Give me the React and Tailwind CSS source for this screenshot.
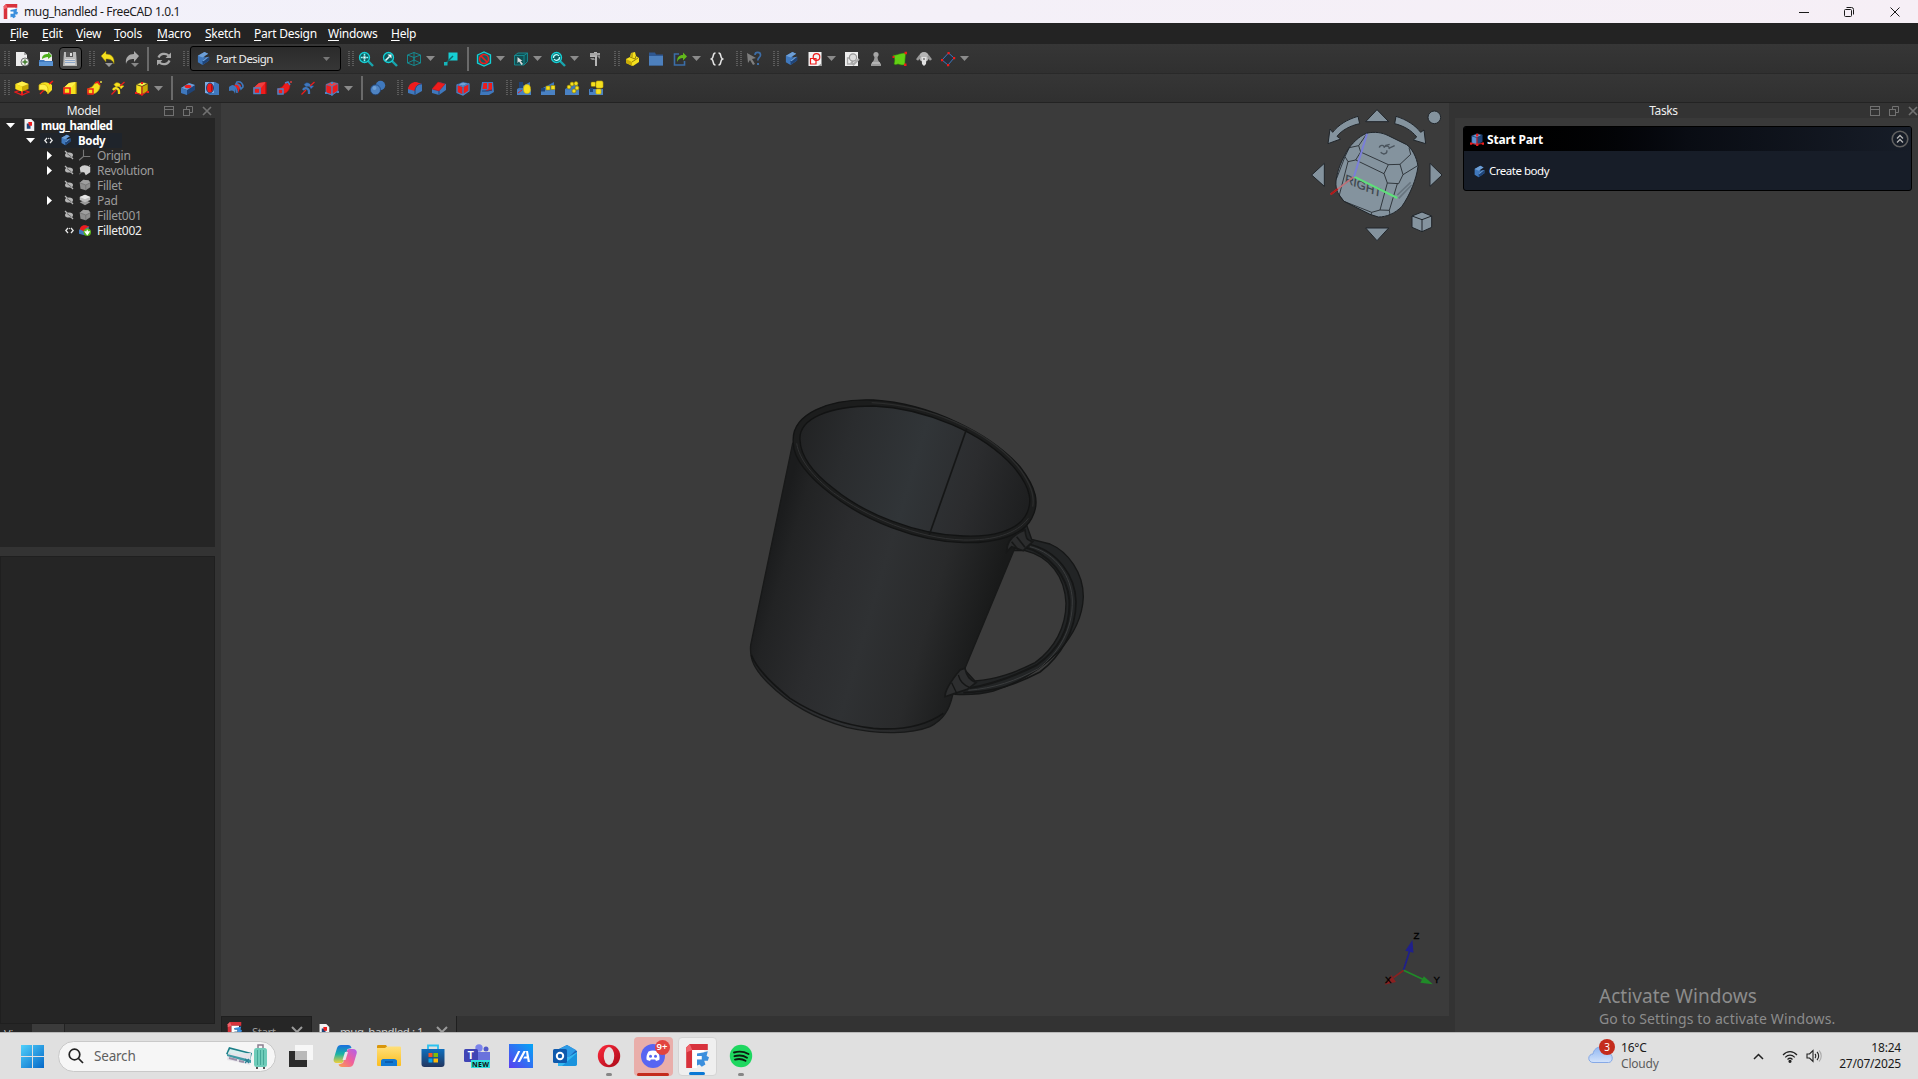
import React from "react";

const Svg = ({ s = 16, children, className = "", vb = "0 0 16 16" }) => (
  <svg width={s} height={s} viewBox={vb} className={"shrink-0 " + className}>{children}</svg>
);

const Y = "#f5e01e", YD = "#c9ab06", YL = "#fff04a", R = "#ee1c1c", RD = "#b00f0f", B = "#3f78bd", BL = "#6d9fd6", BD = "#1f4478", C = "#16d0d6";

/* ---------- toolbar icons ---------- */
const BodyIcon = ({ s = 14, a = BL, b = B, c = BD }) => (
  <Svg s={s}>
    <path d="M2 5 9 1l4 2-4 2v2l5-1v4l-7 5-5-3z" fill={b} />
    <path d="M2 5 9 1l4 2-6 4z" fill={a} />
    <path d="M9 8l5-2v4l-7 5v-4z" fill={c} />
    <path d="M7 10l4-3 3-1-6 5z" fill={a} />
  </Svg>
);
const Cube = ({ t, l, r, e = "#222" }) => (
  <g stroke={e} strokeWidth=".6">
    <path d="M2 4.500 8 2l6 1.500-6 3z" fill={t} />
    <path d="M2 4.500 8 6.500V15l-6-2.500z" fill={l} />
    <path d="M8 6.500 14 3.500V11L8 15z" fill={r} />
  </g>
);
const NewIcon = () => (
  <Svg><path d="M2 1h8l3 3v11H2z" fill="#ececec" /><path d="M10 1v3h3z" fill="#aaa" /><circle cx="11" cy="11" r="4" fill="#e8e8e8" stroke="#444" strokeWidth=".7" /><path d="M11 8.500v5M8.500 11h5" stroke="#3d7a28" strokeWidth="1.400" /></Svg>
);
const OpenIcon = () => (
  <Svg><path d="M2 1h9l3 3v6H2z" fill="#f0f0f0" /><path d="M4 8c0-4 3-5 6-5V1l4 4-4 3V6C7 6 6 7 4 8z" fill="#4caf1a" /><path d="M1 9h5l1 1h8v5H1z" fill={B} /><path d="M1 11h14v4H1z" fill="#5a94d4" /></Svg>
);
const SaveIcon = () => (
  <Svg><path d="M2 1h12l1 14H1z" fill="#b9b9b9" /><path d="M4 1h7v5H4z" fill="#555" /><path d="M8 2h2v3H8z" fill="#ddd" /><path d="M3 8h10v6H3z" fill="#d8d8d8" /><path d="M3 9.500h10M3 11.500h10" stroke="#8ea7c9" /></Svg>
);
const UndoIcon = () => (
  <Svg s={18} vb="0 0 18 18"><path d="M2 6l5-5v3c5 0 9 3 8 10-1-4-4-5-8-5v3z" fill={Y} stroke="#8a7a08" strokeWidth=".5" /><path d="M6 13h8l-4 4z" fill="#999" /></Svg>
);
const RedoIcon = () => (
  <Svg s={18} vb="0 0 18 18"><path d="M16 6l-5-5v3C6 4 2 7 3 14c1-4 4-5 8-5v3z" fill="#a9a9a9" /><path d="M8 13h8l-4 4z" fill="#888" /></Svg>
);
const RefreshIcon = () => (
  <Svg><path d="M2.500 6.500A6 5.500 0 0 1 12.500 4.500M13.500 9.500A6 5.500 0 0 1 3.500 11.500" fill="none" stroke="#a8a8a8" strokeWidth="2.200" /><path d="M15 1.500v5.500h-5.500zM1 14.500V9h5.500z" fill="#a8a8a8" /></Svg>
);
const Lens = ({ children }) => (
  <Svg><path d="M9.500 9.500 15 15" stroke="#18a5ad" strokeWidth="2.400" /><circle cx="6.500" cy="6.500" r="5" fill="#0d5c60" stroke={C} strokeWidth="1.300" />{children}</Svg>
);
const FitAll = () => <Lens><path d="M6.500 2.800v2M6.500 8.200v2M2.800 6.500h2M8.200 6.500h2" stroke="#8ff" strokeWidth="1.600" /><rect x="5.300" y="5.300" width="2.400" height="2.400" fill="#e8ffff" /></Lens>;
const FitSel = () => <Lens><path d="M3.500 9.500l4-4" stroke="#e8ffff" strokeWidth="1.600" /><path d="M5.500 3.500h4v4z" fill="#fff" /></Lens>;
const ViewLens = () => <Lens><path d="M3.500 7a3 3 0 0 1 5.500-2M9.500 6a3 3 0 0 1-5.500 2" stroke="#bff" fill="none" strokeWidth="1.300" /></Lens>;
const WireCube = () => (
  <Svg><path d="M1.500 4 8 1.500 14.500 4v8L8 14.500 1.500 12zM1.500 4 8 6.500 14.500 4M8 6.500v8M8 1.500V9M1.500 12 8 9l6.500 3" fill="none" stroke="#139298" strokeWidth=".9" /></Svg>
);
const AlignIcon = () => <Svg><rect x="5.500" y="1.500" width="9" height="8" fill="#16cfd5" /><path d="M3 12l7-7" stroke="#0b6a6d" strokeWidth="1.400" /><rect x="1" y="11" width="3.500" height="3.500" fill="#16b5ba" /></Svg>;
const DrawStyle = () => <Svg><path d="M1.500 4 8 1l6.500 3v8L8 15l-6.500-3z" fill="#145c60" stroke={C} strokeWidth="1.300" /><circle cx="8" cy="8" r="4.500" fill="none" stroke={R} strokeWidth="1.500" /><path d="M4.900 4.900l6.200 6.200" stroke={R} strokeWidth="1.500" /></Svg>;
const SelCube = () => <Svg><path d="M1.500 4.500 5 2h9.500v8.500L11 14H1.500z" fill="#114f52" stroke="#178f95" strokeWidth=".9" /><path d="M1.500 4.500H11V14M11 4.500 14.500 2" fill="none" stroke="#178f95" strokeWidth=".9" /><path d="M4.500 6v6l1.500-1.500 2.500 3.500 1.500-1-2.500-3h2z" fill="#ddd" /></Svg>;
const Caliper = () => <Svg><path d="M7 1h3v14H8V6H3V4h4z" fill="#b5b5b5" /><path d="M3 2h10v2.500H3z" fill="#a3a3a3" /><path d="M3 7h4l1 2H5zM10 5h3v3z" fill="#8c8c8c" /></Svg>;
const PartIcon = () => <Svg><path d="M7 2l4-1 1 4 3 2v4l-6 4-7-3V8l4-2z" fill={Y} /><path d="M2 8l6 3v4l-6-3z" fill={YD} /><path d="M8 11l6-4M6 6l5 2 1-3M8 2v4" stroke="#7b6800" strokeWidth=".8" fill="none" /></Svg>;
const FolderIcon = () => <Svg><path d="M1 1.500h6l1 2h7v11H1z" fill="#2e5790" /><path d="M1 5h14v9.500H1z" fill="#4d80bd" /></Svg>;
const LinkIcon = () => <Svg><path d="M7 3H2.500v11h10v-4" fill="none" stroke="#3b6ea8" strokeWidth="1.600" /><path d="M5 11c0-5 2-7 6-7V1.500L15 5.500l-4 4V7C8 7 6.500 8 5 11z" fill="#62b81b" /></Svg>;
const Braces = () => <Svg><path d="M6.500 2C3 2 5.500 6.500 2.500 8 5.500 9.500 3 14 6.500 14M9.500 2c3.500 0 1 4.500 4 6-3 1.500-.5 6-4 6" fill="none" stroke="#e6e6e6" strokeWidth="1.500" /></Svg>;
const WhatIcon = () => <Svg><path d="M1 2l9 5-4 1 3 5-2 1-3-5-2 3z" fill="#7e7e7e" /><path d="M9 4c0-3.500 5.500-3.500 5.500 0 0 2.500-2.700 2.500-2.700 5.500" fill="none" stroke="#3d6da6" strokeWidth="1.700" /><rect x="11" y="12" width="2" height="2" fill="#3d6da6" /></Svg>;
const SketchIcon = () => <Svg><rect x="1.500" y="1" width="13" height="14" fill="#f3f3f3" /><path d="M3.500 7.500h5.500v5.500H3.500z" fill="#fff" stroke={R} strokeWidth="1.200" /><circle cx="9.500" cy="6" r="3.300" fill="none" stroke={R} strokeWidth="1.200" /><path d="M15 12v3h-4z" fill="#999" /></Svg>;
const CheckSketch = () => <Svg><rect x="1" y="1" width="13" height="14" fill="#eee" /><path d="M3.500 7h5v6h-5z" fill="none" stroke="#aaa" strokeWidth="1.300" /><circle cx="9" cy="6.500" r="3.600" fill="#ddd" stroke="#999" strokeWidth="1.200" /><path d="M7 11l2.500 2.500L15 8" fill="none" stroke="#aaa" strokeWidth="2" /></Svg>;
const Pawn = () => <Svg><circle cx="8" cy="3.500" r="2.600" fill="#a6a6a6" /><path d="M6.500 5h3c0 4 1 5 3.500 8v2H3v-2c2.500-3 3.500-4 3.500-8z" fill="#9b9b9b" /><path d="M4 12h8" stroke="#ccc" /></Svg>;
const ShapeBinder = () => <Svg><path d="M1 4c3 1 6-2 13-2-1 5-1 7-1 12-3 0-5 0-7-1-2 1-3 1-4 0 1-4 1-5-1-9z" fill="#62d014" stroke="#2d7908" strokeWidth=".6" /><path d="M12.500.8h2.500v2.500h-2.500zM.5 5h2v2h-2zM12 12.500h2.500V15H12z" fill={R} /></Svg>;
const Sheep = () => <Svg><circle cx="8" cy="6" r="5" fill="#b5b5b5" /><path d="M1 9l3-4M15 9l-3-4" stroke="#999" strokeWidth="2.600" /><path d="M5.500 6h5l-.5 7-2 2-2-2z" fill="#e1e1e1" /><circle cx="8" cy="8" r="1" fill="#777" /></Svg>;
const Datum = () => <Svg><path d="M8.500 2 14 7l-6 7-6-5z" fill="#26303d" stroke="#3f78bd" strokeWidth="1" /><path d="M7.500 1h2.200v2.200H7.500zM13 6h2.200v2.200H13zM7 13h2.200v2.200H7zM1 8h2.200v2.200H1z" fill={R} /></Svg>;
const Solid = ({ k, m, d, x, l = BL }) => {
  switch (k) {
    case "pad": return <Svg><path d="M1 12l7-2.500 7 2.500-7 3z" fill="none" stroke={x} strokeWidth="1.300" /><path d="M7 10h2v5H7z" fill={x} /><path d="M1.500 4 8 1.500 14.500 4v5L8 11.500 1.500 9z" fill={d} /><path d="M1.500 4 8 1.500 14.500 4 8 6.500z" fill={l} /><path d="M1.500 4 8 6.500v5L1.500 9z" fill={m} /></Svg>;
    case "rev": return <Svg><path d="M14 2 2 14" stroke={x} strokeWidth="1.300" /><path d="M1 5c4-4 9-3 13 0v5l-4 4c-1-4-5-5-9-4z" fill={m} /><path d="M1 5c5-2 9 0 9 5v4c-1-4-5-5-9-4z" fill={l} stroke={d} strokeWidth=".7" /><path d="M15 1l-4 3" stroke={x} strokeWidth="1.300" /></Svg>;
    case "loft": return <Svg><path d="M1.500 8 7 3l7-1v12H7l-5.500-1z" fill={m} /><path d="M1.500 8 7 3l7-1-5 6z" fill={l} /><path d="M2 8h6v5.500H2z" fill={m} stroke={x} strokeWidth="1.600" /><path d="M14 2v12" stroke={d} strokeWidth="1.300" /></Svg>;
    case "sweep": return <Svg><path d="M1.500 9 6 7l4-5 4 3c0 5-3 8-7 9l-5.500-1z" fill={m} stroke={d} strokeWidth=".6" /><path d="M2 9h5v5H2zM9 3l3-1 2 3" fill="none" stroke={x} strokeWidth="1.500" /><path d="M15 1v2" stroke={l} strokeWidth="1.300" /></Svg>;
    case "helix": return <Svg><path d="M4 4.500c2-3 6-2 7 1l3 .5-3 3c-1-3-3-3-5-2z" fill={m} stroke={d} strokeWidth=".5" /><path d="M3 10c2-3 6-2 6 2v2" fill="none" stroke={m} strokeWidth="2.300" /><path d="M1.500 14.500 6 10M10 6l4.500-4" stroke={x} strokeWidth="1.300" /></Svg>;
    case "prim": return <Svg><Cube t={l} l={m} r={m === R ? R : d} e={m === R ? "#4c84c6" : "#3b3820"} /><path d="M8 6v9M2 13l6 2 6-4" stroke={x} strokeWidth=".9" fill="none" /><path d="M1 12h2v2H1zM7 2h2v2H7zM13 11h2v2h-2zM7 13.500h2v2H7z" fill={x} /></Svg>;
    default: return null;
  }
};
const Pocket = () => <Svg><path d="M1 8 9 3l6 2v5l-8 5-6-2z" fill={BD} /><path d="M1 8 9 3l6 2-8 5z" fill={BL} /><path d="M1 8l6 2v5l-6-2z" fill={B} /><ellipse cx="8" cy="6.500" rx="3.400" ry="1.700" fill={R} /></Svg>;
const Hole = () => <Svg><path d="M1 2h10l4 2v11h-9l-5-2z" fill={B} /><path d="M1 2h9v11H1z" fill="#7daae0" /><ellipse cx="6" cy="8" rx="3.500" ry="5" fill={R} stroke={BD} /><path d="M7 4c2 1 2 6 0 8" fill={RD} /></Svg>;
const Groove = () => <Svg><path d="M1 7c3-3 6-2 7 1l-1 6c-1-4-3-4-6-3z" fill={B} /><path d="M7 4c3-2 6 0 6 2l-3 7C10 9 9 7 6 7z" fill={R} /><path d="M9 2c4-1 6 2 6 5l-2 2C12 6 11 4 8 4zM4 6c4 0 5 3 5 7" fill="none" stroke={B} strokeWidth="1.600" /></Svg>;
const Bool = () => <Svg><circle cx="10.500" cy="5.500" r="4.700" fill={B} /><circle cx="5.500" cy="9.800" r="5" fill="#4e83c2" stroke={BD} strokeWidth=".8" /><circle cx="4.500" cy="8" r="2" fill={BL} /></Svg>;
const FilletI = () => <Svg><path d="M1 8 8 2l7 2v7l-7 4-7-2z" fill={B} /><path d="M1 9c1-5 4-7 8-7l6 2c-4 0-7 2-7 7z" fill={R} /><path d="M8 10v5M8 10c1-4 3-6 7-6" stroke={BD} fill="none" /></Svg>;
const Chamfer = () => <Svg><path d="M1 9 8 2l7 2v6l-7 5-7-2z" fill={B} /><path d="M1 9 7 2l7 2-6 7z" fill={R} stroke={RD} strokeWidth=".5" /><path d="M8 11v4" stroke={BD} /></Svg>;
const Draft = () => <Svg><Cube t={BL} l={R} r={R} e={BD} /><path d="M2 4.500 8 6.500 14 3.500M8 6.500V15M2 4.500v8L8 15l6-4V3.500" fill="none" stroke="#4c84c6" strokeWidth="1.200" /></Svg>;
const Thick = () => <Svg><path d="M3 2h11l1 10-5 3H1z" fill={B} /><path d="M4.500 3h3.500v6H3.500zM9.500 3h3.500v8H6l3.500-2z" fill={R} /><path d="M3 11h6l4-1" stroke={BD} fill="none" /></Svg>;
const Pattern = ({ k }) => (
  <Svg>
    <path d={k === 3 ? "M1 9h7v6H1z" : "M1 9 14 2v13H1z"} fill={B} />
    <path d="M1 10 15 9v6H1z" fill="#4a82c4" />
    {k === 0 && <><path d="M3 2h4v6H3z" fill={BD} /><ellipse cx="11" cy="9" rx="3.500" ry="4.500" fill={Y} stroke={YD} strokeWidth=".6" /><path d="M2 13l4-3" stroke={R} /></>}
    {k === 1 && <><rect x="1" y="8" width="4" height="3.500" fill={BD} /><rect x="6" y="6" width="4" height="4" fill={Y} stroke="#8a7600" strokeWidth=".5" /><rect x="11" y="5.500" width="4" height="4" fill={Y} stroke="#8a7600" strokeWidth=".5" /></>}
    {k === 2 && [[5, 7], [8, 4], [12, 3.500], [13, 8], [10, 11]].map(([x, y]) => <circle key={x} cx={x} cy={y} r="2" fill={Y} stroke="#8a7600" strokeWidth=".6" />)}
    {k === 3 && <><rect x="8" y="1" width="7" height="7" rx="1.500" fill={Y} stroke={YD} strokeWidth=".6" /><rect x="3" y="2" width="4.500" height="4.500" rx="1" fill={Y} stroke="#8a7600" strokeWidth=".5" /><rect x="8" y="9" width="5" height="5" rx="1" fill={Y} stroke={YD} strokeWidth=".6" /><path d="M2 8h3v4H2z" fill={BD} /></>}
  </Svg>
);

const Grip = ({ w = "w-[13px]" }) => (
  <div className={"flex h-full shrink-0 items-center justify-end " + w}>
    <svg width="6" height="16" viewBox="0 0 6 16" className="shrink-0">
      {[0, 1, 2, 3, 4, 5, 6, 7].map((i) => <path key={i} d={`M0 ${i * 2 + 0.5}h2M4 ${i * 2 + 0.5}h2`} stroke="#5c5c5c" />)}
    </svg>
  </div>
);
const Slot = ({ children }) => <div className="flex h-full w-6 shrink-0 items-center justify-center">{children}</div>;
const Drop = () => (
  <div className="flex h-full w-[13px] shrink-0 items-center"><svg width="9" height="5" viewBox="0 0 9 5"><path d="M0 0h9L4.500 5z" fill="#8b8b8b" /></svg></div>
);
const Sep = ({ w = "w-[9px]" }) => (
  <div className={"flex h-full shrink-0 items-center justify-center " + w}><div className="h-6 w-0.5 bg-[#6a6a6a]" /></div>
);

const MENU = [["File", "w-8"], ["Edit", "w-[34px]"], ["View", "w-[38px]"], ["Tools", "w-[43px]"], ["Macro", "w-12"], ["Sketch", "w-[49px]"], ["Part Design", "w-[74px]"], ["Windows", "w-[63px]"], ["Help", "w-10"]];

const FreeCadLogo = ({ s = 16 }) => (
  <Svg s={s} vb="0 0 20 20">
    <path d="M4 0h15v5H6v15H1V3z" fill="#d8323c" /><path d="M4 0 1 3v4l5-2z" fill="#f0636b" />
    <path d="M6 5h10v3h-6v2h4v3h-4v7H6z" fill="#fff" />
    <path d="M15 7l4-1-1 4 2 1-1 3-3 0 1 3-3 2-2-2-2 1v-5h4v-3h-4V8z" fill="#3c8fdd" />
  </Svg>
);
const DocIcon = () => <Svg s={12}><path d="M2 0h9l4 4v12H2z" fill="#f2f2f2" /><path d="M5 6h5v7H5z" fill="#1f4478" /><path d="M7 4h5v5H8z" fill={R} /></Svg>;

const TitleBar = () => (
  <header className="flex h-[23px] items-center bg-gradient-to-r from-[#f2f1fa] to-[#f6eff6] pl-[3px]">
    <FreeCadLogo s={15} />
    <span className="ml-1.5 w-[200px] whitespace-nowrap text-[12px] tracking-[-0.38px] text-[#1b1b1b]">mug_handled - FreeCAD 1.0.1</span>
    <div className="ml-auto flex h-full">
      {[0, 1, 2].map((i) => (
        <div key={i} className="flex w-[45.500px] items-center justify-center pr-px">
          <svg width="10" height="10" viewBox="0 0 10 10" fill="none" stroke="#1a1a1a" strokeWidth="1">
            {i === 0 && <path d="M0 5.500h10" />}
            {i === 1 && <><rect x=".5" y="2.500" width="7" height="7" rx="1" /><path d="M2.500 .5h5a2 2 0 0 1 2 2v5" /></>}
            {i === 2 && <path d="M.5.5l9 9M9.500.5l-9 9" />}
          </svg>
        </div>
      ))}
    </div>
  </header>
);

const MenuBar = () => (
  <nav className="flex h-[21px] items-center bg-[#232323] pl-[10px] text-[12px] tracking-[-0.25px] text-white">
    {MENU.map(([t, w]) => (
      <span key={t} className={"shrink-0 whitespace-nowrap " + w}><span className="underline underline-offset-2">{t[0]}</span>{t.slice(1)}</span>
    ))}
  </nav>
);

const yel = { m: Y, d: YD, l: YL, x: R };
const mix = { m: R, d: RD, l: "#f04040", x: "#4c84c6" };

const Toolbars = () => (
  <div className="h-[59px] bg-[#333]">
    <div className="flex h-[30px] items-center border-b border-[#292929] bg-gradient-to-b from-[#363636] to-[#303030]">
      <Grip w="w-[10px]" />
      <Slot><NewIcon /></Slot><Slot><OpenIcon /></Slot>
      <Slot><div className="flex h-[23px] w-[23px] shrink-0 items-center justify-center rounded-sm border border-black bg-[#474747]"><SaveIcon /></div></Slot>
      <Grip w="w-[14px] pr-px" />
      <Slot><UndoIcon /></Slot><Slot><RedoIcon /></Slot><Sep w="w-2" /><Slot><RefreshIcon /></Slot>
      <Grip w="w-[14px] pr-px" />
      <div className="flex h-[25px] w-[151px] shrink-0 items-center rounded-[3px] border border-black bg-gradient-to-b from-[#2b2b2b] to-[#363636] pl-[5px] pr-2.5 text-[11.500px] text-[#eee]">
        <BodyIcon s={15} /><span className="ml-[5px] whitespace-nowrap tracking-[-0.55px]">Part Design</span>
        <svg width="7" height="4" viewBox="0 0 7 4" className="ml-auto"><path d="M0 0h7L3.500 4z" fill="#777" /></svg>
      </div>
      <Grip />
      <Slot><FitAll /></Slot><Slot><FitSel /></Slot><Slot><WireCube /></Slot><Drop /><Slot><AlignIcon /></Slot><Sep />
      <Slot><DrawStyle /></Slot><Drop /><Slot><SelCube /></Slot><Drop /><Slot><ViewLens /></Slot><Drop /><Slot><Caliper /></Slot>
      <Grip /><Slot><PartIcon /></Slot><Slot><FolderIcon /></Slot><Slot><LinkIcon /></Slot><Drop /><Slot><Braces /></Slot>
      <Grip /><Slot><WhatIcon /></Slot>
      <Grip /><Slot><BodyIcon s={15} /></Slot><Slot><SketchIcon /></Slot><Drop /><Slot><CheckSketch /></Slot><Slot><Pawn /></Slot><Slot><ShapeBinder /></Slot><Slot><Sheep /></Slot><Slot><Datum /></Slot><Drop />
    </div>
    <div className="flex h-[29px] items-center border-b border-[#232323] bg-gradient-to-b from-[#363636] to-[#303030]">
      <Grip w="w-[10px]" />
      {["pad", "rev", "loft", "sweep", "helix", "prim"].map((k) => <Slot key={k}><Solid k={k} {...yel} /></Slot>)}
      <Drop /><Sep />
      <Slot><Pocket /></Slot><Slot><Hole /></Slot><Slot><Groove /></Slot>
      <Slot><Solid k="loft" {...mix} /></Slot><Slot><Solid k="sweep" {...mix} /></Slot><Slot><Solid k="helix" m="#3f78bd" d={BD} x={R} /></Slot><Slot><Solid k="prim" {...mix} /></Slot>
      <Drop /><Sep /><Slot><Bool /></Slot>
      <Grip /><Slot><FilletI /></Slot><Slot><Chamfer /></Slot><Slot><Draft /></Slot><Slot><Thick /></Slot>
      <Grip />{[0, 1, 2, 3].map((k) => <Slot key={k}><Pattern k={k} /></Slot>)}
    </div>
  </div>
);

/* ---------- model tree ---------- */
const Eye = ({ on }) => on
  ? <Svg s={9} vb="0 0 9 9"><path d="M3 2 .8 4.500 3 7M6 2l2.200 2.500L6 7" stroke="#e8e8e8" strokeWidth="1.300" fill="none" /><circle cx="4.500" cy="2.500" r=".7" fill="#ccc" /></Svg>
  : <Svg s={10} vb="0 0 10 10"><path d="M1 1l8 8" stroke="#b5b5b5" strokeWidth="1.300" /><ellipse cx="5" cy="5" rx="4" ry="2.600" fill="#b5b5b5" /><path d="M3 3.500 7.500 7" stroke="#555" strokeWidth=".8" /></Svg>;
const GreyCube = () => <Svg s={12}><path d="M1 5 6 1l7 1 2 3v6l-6 4-7-2z" fill="#8d8d8d" /><path d="M1 5 6 1l7 1 2 3-6 3z" fill="#9e9e9e" /><path d="M9 8v7M9 8l6-3M1 5l8 3" stroke="#6f6f6f" fill="none" /></Svg>;
const TreeGlyph = ({ k }) => {
  switch (k) {
    case "origin": return <Svg s={12}><path d="M6 1v9L0 15M6 10h9" stroke="#777" strokeWidth="1.500" fill="none" /></Svg>;
    case "rev": return <Svg s={12}><path d="M1 5c4-5 9-4 14-1v7l-6 4-2-4-5 0z" fill="#d0d0d0" /><path d="M0 14l4-4M12 4l3-3" stroke="#999" /></Svg>;
    case "pad": return <Svg s={12}><path d="M1 11l7-3 7 3-7 4z" fill="#9a9a9a" /><path d="M1 4 8 1l7 3v4l-7 3-7-3z" fill="#bdbdbd" /><path d="M1 4 8 1l7 3-7 3z" fill="#e6e6e6" /></Svg>;
    case "tip": return <Svg s={12}><path d="M0 8 6 2l7 1v8l-6 4-7-2z" fill={B} /><path d="M1 7c1-5 5-6 9-5l4 2c-4 0-6 2-7 6z" fill={R} /><circle cx="11" cy="11" r="5" fill="#58b51d" /><path d="M11 7.500v4M8.500 10.500 11 14l2.500-3.500z" stroke="#fff" strokeWidth="1.600" fill="#fff" /></Svg>;
    default: return <GreyCube />;
  }
};
const TREE = [
  ["Origin", "origin", true, false], ["Revolution", "rev", true, false], ["Fillet", "cube", false, false],
  ["Pad", "pad", true, false], ["Fillet001", "cube", false, false], ["Fillet002", "tip", false, true],
];
const Down = () => <svg width="9" height="5" viewBox="0 0 9 5" className="shrink-0"><path d="M0 0h9L4.500 5z" fill="#fff" /></svg>;

const DockTitle = ({ title, className = "", text = "" }) => (
  <div className={"flex h-[15px] shrink-0 items-center bg-[#333] text-[12px] leading-[15px] text-[#eee] " + className}>
    <span className={"flex-1 text-center tracking-[-0.4px] " + text}>{title}</span>
    <div className="flex items-center gap-[9px] text-[#717171]">
      <svg width="10" height="10" viewBox="0 0 10 10" fill="none" stroke="currentColor"><rect x=".5" y=".5" width="9" height="9" /><path d="M1 3.500h8" /></svg>
      <svg width="10" height="10" viewBox="0 0 10 10" fill="none" stroke="currentColor"><rect x=".5" y="3.500" width="6" height="6" /><path d="M3.500 3V.5h6v6H7" /></svg>
      <svg width="10" height="10" viewBox="0 0 10 10" fill="none" stroke="currentColor" strokeWidth="1.700"><path d="M1 1l8 8M9 1 1 9" /></svg>
    </div>
  </div>
);

const ModelPanel = () => (
  <aside className="flex w-[215px] shrink-0 flex-col bg-[#333]">
    <DockTitle title="Model" className="pr-[3px]" text="pl-[3px]" />
    <div className="h-[429px] shrink-0 overflow-hidden bg-[#252525] text-[12px] leading-[15px]">
      <div className="-mt-[0.500px] flex h-[15px] items-center pl-[6px] text-white"><Down /><span className="w-2" /><DocIcon /><b className="ml-[6px] text-[11.500px] tracking-[-0.55px]">mug_handled</b></div>
      <div className="flex h-[15px] items-center pl-[26px] text-white">
        <Down />
        <div className="ml-[5px] flex h-[15px] w-[82px] items-center bg-[#1f242b] pl-1"><Eye on /><span className="w-[7px]" /><BodyIcon s={12} /><b className="ml-1.5 text-[11.500px] tracking-[-0.35px]">Body</b></div>
      </div>
      {TREE.map(([t, k, arrow, on]) => (
        <div key={t} className={"flex h-[15px] items-center pl-[47px] " + (on ? "text-[#eee]" : "text-[#9c9c9c]")}>
          <svg width="5" height="9" viewBox="0 0 5 9" className="shrink-0">{arrow && <path d="M0 0v9l5-4.500z" fill="#fff" />}</svg>
          <span className="flex w-[27px] justify-end pr-[5px]"><Eye on={on} /></span>
          <TreeGlyph k={k} />
          <span className="ml-[6px] tracking-[-0.3px]">{t}</span>
        </div>
      ))}
    </div>
    <div className="mt-[9px] h-[468px] shrink-0 border border-[#1f1f1f] bg-[#252525]" />
    <div className="flex h-2 overflow-hidden text-[11px] leading-[20px] text-[#bbb]">
      <div className="w-8 bg-[#262626] pl-1">Vi</div>
      <div className="w-[33px] border-r border-[#222] bg-[#3b3b3b]" />
    </div>
  </aside>
);

/* ---------- 3D viewport drawings ---------- */
const Mug = () => (
  <svg width="370" height="370" viewBox="0 0 1110 1110" className="absolute left-[509px] top-[277px]">
    <defs>
      <linearGradient id="mugBody" gradientUnits="userSpaceOnUse" x1="125" y1="500" x2="780" y2="690">
        <stop offset="0" stopColor="#1b1c1d" /><stop offset=".08" stopColor="#222324" /><stop offset=".3" stopColor="#2b2c2e" /><stop offset=".5" stopColor="#2f3133" /><stop offset=".75" stopColor="#292a2b" /><stop offset="1" stopColor="#191a1a" />
      </linearGradient>
      <linearGradient id="mugInner" gradientUnits="userSpaceOnUse" x1="210" y1="170" x2="890" y2="370">
        <stop offset="0" stopColor="#222324" /><stop offset=".2" stopColor="#2a2c2e" /><stop offset=".5" stopColor="#313538" /><stop offset=".75" stopColor="#2b2c2e" /><stop offset="1" stopColor="#1e1f20" />
      </linearGradient>
    </defs>
    <path d="M888 430 905 478 960 492C1015 515 1060 580 1060 650 1058 710 1035 760 985 815 935 865 870 908 790 933 760 941 720 945 675 943L700 865 735 903C800 898 850 880 915 848 975 805 1008 740 1008 670 1005 590 960 530 885 512L850 512 835 480z" fill="#222425" stroke="#161717" strokeWidth="4" />
    <path d="M880 500C960 520 1012 590 1018 660 1022 745 985 810 920 855 850 890 790 912 720 924" fill="none" stroke="#161717" strokeWidth="6" />
    <path d="M900 500C980 520 1024 590 1027 660 1029 750 985 820 925 866 860 902 790 925 715 931" fill="none" stroke="#3a3c3d" strokeWidth="3" />
    <path d="M895 492C985 512 1036 590 1038 665 1038 755 990 830 930 876 860 912 800 935 700 938" fill="none" stroke="#151616" strokeWidth="5" />
    <path d="M188 190 62 795C58 840 75 870 115 910 170 965 250 1015 350 1042 450 1065 545 1062 600 1040 640 1020 658 990 668 945L705 865 850 515 890 430z" fill="url(#mugBody)" stroke="#181919" strokeWidth="4" />
    <path d="M64 825C80 865 130 915 180 955 250 1000 340 1035 430 1045 520 1052 590 1035 640 1000" fill="none" stroke="#141515" strokeWidth="5" />
    <path d="M190 190C180 100 300 55 430 60 600 70 780 160 870 260 920 325 930 370 905 415 880 465 800 490 700 488 560 485 400 420 300 340 235 290 190 235 190 190z" fill="#1c1d1d" stroke="#131414" strokeWidth="4" />
    <path d="M210 180C205 115 300 78 430 78 590 85 760 160 850 260 905 325 910 370 885 410 860 450 790 472 700 468 560 465 400 400 310 325 245 275 212 230 210 180z" fill="url(#mugInner)" stroke="#121313" strokeWidth="4" />
    <path d="M200 190C208 240 250 290 310 338 410 410 560 475 700 480 790 482 860 462 895 415" fill="none" stroke="#303132" strokeWidth="3" />
    <path d="M425 68C600 76 770 152 860 255 900 305 915 345 908 380" fill="none" stroke="#2b2c2c" strokeWidth="4" />
    <path d="M710 146 598 464" stroke="#151616" strokeWidth="5" />
    <path d="M830 515C830 490 845 465 885 450 888 475 890 480 908 485L880 512 845 500z" fill="#2b2c2d" stroke="#171818" strokeWidth="5" />
    <path d="M860 470 885 502M845 485 865 510" fill="none" stroke="#171818" strokeWidth="5" />
    <path d="M645 950C645 930 665 900 690 870L705 865C710 890 720 900 738 908L712 928 675 940z" fill="#2d2e2f" stroke="#171818" strokeWidth="5" />
    <path d="M685 885C690 905 700 915 718 922M665 908 680 940" fill="none" stroke="#151616" strokeWidth="4" />
  </svg>
);

const NavCube = () => (
  <svg width="180" height="152" viewBox="0 24 540 456" className="absolute left-[1069px] top-0">
    <g fill="#84939e" stroke="#20252a" strokeWidth="3" strokeLinejoin="round">
      <path d="M261 44 296 80H227zM261 437 227 399h69zM65 240 103 205v69zM456 240 420 205v69z" />
      <path d="M204 64C170 74 145 90 128 112L120 102 114 146 152 132 141 124C155 106 180 92 209 86zM318 64C350 74 375 90 392 112L402 105 407 146 370 135 380 126C365 106 340 92 314 86z" />
      <circle cx="433" cy="67" r="19" />
      <path d="M396 351 425 363V397L396 410 366 397V363z" /><path d="M366 363 396 374 425 363M396 374V410" fill="none" />
      <path d="M232 114C255 110 275 112 295 122L350 149C365 160 380 185 384 214 380 250 360 300 335 335 315 355 290 366 265 366L240 358 162 319C145 300 136 285 138 258 142 225 155 195 176 160 195 135 215 120 232 114z" />
      <g fill="none" strokeWidth="2.500"><path d="M206 152 212 171 295 209 330 208 362 178 357 158M212 171 197 195 174 200 165 185 178 158 206 152 232 114M197 195 282 236 295 209M282 236 292 264 326 266 339 239 330 208M339 239 383 212M292 264 270 345 298 346 322 266M174 200 148 300 162 319M165 185 140 250M162 319 245 352 270 345M245 352 243 359M298 346 300 360" /></g>
    </g>
    <text x="0" y="0" transform="matrix(1 .42 -.12 1 164 262)" fontFamily="Liberation Sans" fontSize="35" fill="#3a434b" stroke="#3a434b" strokeWidth=".6">RIGHT</text>
    <path d="M268 158c2-10 16-8 14 0 4-8 18-6 15 4M272 172c8 8 22 4 18-6M285 152l14-4M296 160l18-8M280 178l8-4" fill="none" stroke="#4a545d" strokeWidth="4" />
    <path d="M322 300 362 262M326 310 365 270" stroke="#68757f" strokeWidth="5" />
    <path d="M122 298 192 245" stroke="#c07078" strokeWidth="5" /><path d="M122 298 143 282" stroke="#b01818" strokeWidth="6" />
    <path d="M192 245 322 309" stroke="#5fe07a" strokeWidth="6" /><path d="M192 245 231 116" stroke="#7a7fd8" strokeWidth="6" />
  </svg>
);

const AxisCross = () => (
  <svg width="90" height="66" viewBox="0 0 252 198" preserveAspectRatio="none" className="absolute left-[1160px] top-[823px]" fontFamily="Liberation Sans" fontSize="27">
    <path d="M63 133 84 62" stroke="#20208a" strokeWidth="5" /><path d="M88 42 68 74 91 80z" fill="#20208a" />
    <path d="M63 133 120 161" stroke="#208a28" strokeWidth="5" /><path d="M145 175 120 151 110 170z" fill="#208a28" />
    <path d="M63 133 35 155" stroke="#8a2020" strokeWidth="5" /><path d="M10 176 29 147 42 168z" fill="#8a2020" />
    <g stroke="#000" strokeWidth=".8"><text x="91" y="38">Z</text><text x="147" y="172">Y</text><text x="11" y="172">X</text></g>
  </svg>
);

const X = () => <svg width="12" height="12" viewBox="0 0 12 12" stroke="#9a9a9a" strokeWidth="2"><path d="M1 1l10 10M11 1 1 11" /></svg>;
const Viewport = () => (
  <main className="flex w-[1228px] shrink-0 flex-col">
    <div className="relative h-[913px] overflow-hidden bg-[#3b3b3b]"><Mug /><NavCube /><AxisCross /></div>
    <div className="flex h-4 overflow-hidden bg-[#333] text-[11.500px] tracking-[-0.45px] text-[#ccc]">
      <div className="flex h-[32px] w-[91px] items-center border border-[#1f1f1f] bg-[#262626] pl-[5px] pr-2 text-[#999]"><span className="-mt-[5px]"><FreeCadLogo s={15} /></span><span className="ml-2.5">Start</span><span className="ml-auto"><X /></span></div>
      <div className="flex h-[32px] w-[145px] items-center border-r border-[#1f1f1f] bg-[#3b3b3b] pl-[6px] pr-2"><span className="-mt-1"><DocIcon /></span><span className="ml-2.5 whitespace-nowrap">mug_handled : 1</span><span className="ml-auto"><X /></span></div>
    </div>
  </main>
);

const TasksPanel = () => (
  <aside className="flex min-w-0 flex-1 flex-col bg-[#393939]">
    <DockTitle title="Tasks" text="pl-[2px]" />
    <section className="ml-2 mr-1.5 mt-2 h-[65px] overflow-hidden rounded-[3px] border border-black bg-[#171d28] text-[12px] text-white">
      <div className="flex h-6 items-center bg-gradient-to-r from-black via-[#090c13] to-[#171d28] pl-1.5 pr-[2px]">
        <Svg s={14}><Cube t={BL} l="#5b93d4" r={BD} e="#1c3f70" /><path d="M8 3v11M1 13l7 1 7-1" stroke={R} fill="none" /><path d="M0 12h2.500v2.500H0zM7 2h2.500v2.500H7zM7 13.500h2.500V16H7zM13.500 12H16v2.500h-2.500z" fill={R} /></Svg>
        <b className="ml-[3px] mt-0.5 tracking-[-0.2px]">Start Part</b>
        <svg width="18" height="18" viewBox="0 0 18 18" className="ml-auto" fill="none"><circle cx="9" cy="9" r="7.800" stroke="#606060" strokeWidth="1.600" /><path d="M6 8.500l3-3 3 3M6 12.500l3-3 3 3" stroke="#b5b5b5" strokeWidth="1.300" /></svg>
      </div>
      <div className="flex h-10 items-center pl-[9px]"><BodyIcon s={13} /><span className="ml-[3px] text-[11.500px] tracking-[-0.48px]">Create body</span></div>
    </section>
    <div className="mt-auto pb-[3px] pl-[144px] text-[#8c8c8c]">
      <div className="text-[19px] leading-[26px] tracking-[0.05px]">Activate Windows</div>
      <div className="text-[14px] leading-[20px] tracking-[0.13px]">Go to Settings to activate Windows.</div>
    </div>
  </aside>
);

/* ---------- Windows taskbar ---------- */
const TaskItem = ({ children, hl = "", mark = "" }) => (
  <div className="flex h-full w-11 items-center justify-center">
    <div className={"relative flex h-[39px] w-[39px] items-center justify-center rounded " + hl}>
      {children}
      {mark && <span className={"absolute bottom-0 h-[3px] rounded-full " + mark} />}
    </div>
  </div>
);
const Defs = () => (
  <svg width="0" height="0" className="absolute"><defs>
    <linearGradient id="win" x1="0" y1="0" x2="1" y2="1"><stop offset="0" stopColor="#4fd0fb" /><stop offset="1" stopColor="#0568c8" /></linearGradient>
    <linearGradient id="cop1" x1="0" y1="0" x2="0" y2="1"><stop offset="0" stopColor="#1a6de0" /><stop offset=".5" stopColor="#19b3a5" /><stop offset="1" stopColor="#f2cf3a" /></linearGradient>
    <linearGradient id="cop2" x1="1" y1="0" x2="0" y2="1"><stop offset="0" stopColor="#b05ff0" /><stop offset=".5" stopColor="#f0609a" /><stop offset="1" stopColor="#fba04c" /></linearGradient>
    <linearGradient id="my" x1="0" y1="1" x2="1" y2="0"><stop offset="0" stopColor="#5a3df0" /><stop offset="1" stopColor="#04a6f5" /></linearGradient>
    <linearGradient id="fold" x1="0" y1="0" x2="0" y2="1"><stop offset="0" stopColor="#ffe07a" /><stop offset="1" stopColor="#fbbd1f" /></linearGradient>
    <linearGradient id="store" x1="0" y1="0" x2="0" y2="1"><stop offset="0" stopColor="#0f6fbe" /><stop offset="1" stopColor="#22365f" /></linearGradient>
    <linearGradient id="op" x1="0" y1="0" x2="1" y2="1"><stop offset="0" stopColor="#ff2a3c" /><stop offset="1" stopColor="#a80a18" /></linearGradient>
    <linearGradient id="cloud" x1="0" y1="0" x2="0" y2="1"><stop offset="0" stopColor="#8fb6f2" /><stop offset="1" stopColor="#d3e3fb" /></linearGradient>
  </defs></svg>
);
const Taskbar = () => (
  <footer className="flex h-[47px] items-center border-t border-[#b9b9b9] bg-[#e0e0e0]">
    <Defs />
    <svg width="23" height="23" viewBox="0 0 23 23" className="ml-[21px] shrink-0"><path d="M0 0h11v11H0zM12 0h11v11H12zM0 12h11v11H0zM12 12h11v11H12z" fill="url(#win)" /></svg>
    <div className="ml-[14px] flex h-[31px] w-[218px] shrink-0 items-center rounded-full border border-[#c9c9c9] bg-[#f6f6f6] pl-[9px] pr-[7px]">
      <svg width="16" height="16" viewBox="0 0 16 16" fill="none" stroke="#222" strokeWidth="1.700"><circle cx="6.500" cy="6.500" r="5.300" /><path d="M10.500 10.500 15 15" /></svg>
      <span className="ml-2.5 text-[13.500px] tracking-[-0.2px] text-[#5f5f5f]">Search</span>
      <svg width="43" height="25" viewBox="0 0 43 25" className="ml-auto">
        <path d="M4 3l23 6-2 8L1 10z" fill="#1b7f88" /><path d="M5 5l20 5-2 5L3 9z" fill="#d9efee" /><path d="M3 9l10 1 13-1-1 12-12-3-11-2z" fill="#e6e4ea" /><path d="M2 10l24 6v3L2 12z" fill="#3f9aa5" /><path d="M4 14l8 2M14 17l5 1" stroke="#9b8fa8" strokeWidth="2" /><path d="M20 15l4 4m0-4-4 4" stroke="#2a7f92" strokeWidth="1.200" />
        <path d="M33 5V1h5v4" fill="none" stroke="#8b7f90" strokeWidth="1.500" /><rect x="29" y="4" width="13" height="19" rx="2.500" fill="#6fccb9" /><path d="M32.500 6v15M35.500 6v15M38.500 6v15" stroke="#45a898" /><path d="M31 23h2v2h-2zM38 23h2v2h-2z" fill="#555" />
      </svg>
    </div>
    <div className="flex h-full pl-[3px]">
      <TaskItem><Svg s={24} vb="0 0 24 24"><path d="M0 7h18v16H0z" fill="#2b2b2b" /><path d="M6 1h18v15H6z" fill="#fafafa" opacity=".9" /><path d="M6 7h12v9H6z" fill="#b9b9b9" /></Svg></TaskItem>
      <TaskItem><Svg s={24} vb="0 0 24 24"><path d="M8 1h7c2 0 3 1 3.500 3l-4 1-4 12c-.5 1.500-1 2-3 2H4c-3 0-4-2-3-5L4 4c.7-2 2-3 4-3z" fill="url(#cop1)" /><path d="M16 23H9c-2 0-3-1-3.500-2.500L10 19l4-12c.5-1.500 1-2 3-2h3c3 0 4.500 2 3.500 5l-3 10c-.7 2-2 3-4.500 3z" fill="url(#cop2)" /><path d="M9.500 16 12 8h3l-2.500 8z" fill="#e8e6ec" /></Svg></TaskItem>
      <TaskItem><Svg s={24} vb="0 0 24 24"><path d="M0 2c0-1 1-1 1-1h8l2 3h-11z" fill="#d9960c" /><path d="M0 4h8l2-1.500h13c1 0 1 1 1 1V21c0 1-1 1-1 1H1c-1 0-1-1-1-1z" fill="url(#fold)" /><path d="M4 22v-5c0-1 1-2 2-2h11c2 0 3 1 3 2v5z" fill="#1279d2" /><path d="M8 18h8" stroke="#0a56a5" strokeWidth="1.500" /></Svg></TaskItem>
      <TaskItem><Svg s={24} vb="0 0 24 24"><path d="M7 5V1.500h10V5" fill="none" stroke="#2cc2f0" strokeWidth="1.800" /><path d="M.5 5h23v15c0 2-1 3-3 3h-17c-2 0-3-1-3-3z" fill="url(#store)" /><path d="M7.500 9H11.500v4H7.500z" fill="#f35325" /><path d="M12.500 9H17v4h-4.500z" fill="#81bc06" /><path d="M7.500 14.500H11.500v4H7.500z" fill="#05a6f0" /><path d="M12.500 14.500H17v4h-4.500z" fill="#ffba08" /></Svg></TaskItem>
      <TaskItem><Svg s={26} vb="0 0 26 26"><circle cx="15" cy="5" r="3.700" fill="#7b83eb" /><circle cx="22" cy="6" r="2.500" fill="#5059c9" /><path d="M11 9h15v8c0 4-4 6-7 6-5 0-8-3-8-7z" fill="#6a72dc" /><rect y="6" width="14" height="13" rx="1.500" fill="#4145b5" /><text x="3.500" y="16" fontSize="11" fontWeight="bold" fontFamily="Open Sans" fill="#fff">T</text><rect x="7" y="17" width="19" height="8" fill="#2fe0dc" /><text x="8" y="23.500" fontSize="7" textLength="17" fontWeight="bold" fontFamily="Open Sans" fill="#111">NEW</text></Svg></TaskItem>
      <TaskItem><Svg s={24} vb="0 0 24 24"><path d="M0 0h24v24H0z" fill="url(#my)" /><path d="M3.500 18 9 7h2.300L6 18zM8.500 18 14.500 7H17l-6 11zM17 7h2l2 11h-2.300l-.5-3.500h-4l1.200-2h2.300z" fill="#fff" /></Svg></TaskItem>
      <TaskItem><Svg s={24} vb="0 0 24 24"><path d="M4 6 14 1l10 6v4L12 14z" fill="#1b65b8" /><path d="M6 5 14 1l9 5-8 8z" fill="#2e9be6" /><path d="M5 22V9l9 5 10-6v12c0 1-1 2-2 2z" fill="#33b8f0" /><path d="M24 9 9 22h13c1 0 2-1 2-2z" fill="#1a93dd" /><rect y="5" width="14" height="14" rx="1.500" fill="#0f5aad" /><circle cx="7" cy="12" r="3.200" fill="none" stroke="#fff" strokeWidth="2" /></Svg></TaskItem>
      <TaskItem mark="w-[6px] bg-[#868686]"><Svg s={24} vb="0 0 24 24"><circle cx="12" cy="12" r="11.200" fill="url(#op)" /><ellipse cx="12" cy="12" rx="5.200" ry="9" fill="#e4e2e2" /></Svg></TaskItem>
      <TaskItem hl="bg-[#e9aeaa]" mark="w-8 bg-[#c42b1c]">
        <Svg s={24} vb="0 0 24 24"><circle cx="12" cy="12" r="12" fill="#5865f2" /><path d="M7.500 7.500c3-1.200 6-1.200 9 0 1.600 2.500 2.300 5 2 8-1.500 1-2.500 1.300-3.500 1.500l-.8-1.500h-4.400L9 17c-1-.2-2-.5-3.500-1.500-.3-3 .4-5.500 2-8z" fill="#fff" /><circle cx="9.500" cy="12.300" r="1.500" fill="#5865f2" /><circle cx="14.500" cy="12.300" r="1.500" fill="#5865f2" /></Svg>
        <span className="absolute right-[3px] top-[3px] flex h-[15px] w-[15px] items-center justify-center rounded-full bg-[#e2443f] text-[9.500px] font-semibold text-white">9+</span>
      </TaskItem>
      <TaskItem hl="border border-[#d4d4d4] bg-[#efefef]" mark="w-4 bg-[#0a78d4]"><FreeCadLogo s={24} /></TaskItem>
      <TaskItem mark="w-[6px] bg-[#868686]"><Svg s={24} vb="0 0 24 24"><circle cx="12" cy="12" r="11.200" fill="#1ed760" /><path d="M5 8.500c5-1.500 10-1 14.500 1.500M5.500 12.200c4.500-1.300 9-.8 12.500 1.500M6 15.600c4-1 7.500-.6 10.500 1.200" fill="none" stroke="#0d1a10" strokeWidth="1.900" strokeLinecap="round" /></Svg></TaskItem>
    </div>
    <div className="ml-auto flex h-full items-center text-[12px] leading-4 text-[#1a1a1a]">
      <div className="relative -mt-1 h-6 w-7">
        <svg width="26" height="18" viewBox="0 0 26 18" className="mt-1"><path d="M5 16.500a4 4 0 0 1 0-8.500C6 3 9 1 13 1s7 3 7.500 6c5 1 5 9.500 0 9.500z" fill="url(#cloud)" stroke="#86a9e6" strokeWidth="1" /></svg>
        <span className="absolute -top-[3px] left-[11px] flex h-4 w-4 items-center justify-center rounded-full bg-[#c42b1c] text-[10px] text-white">3</span>
      </div>
      <div className="ml-[5px] w-[132px] tracking-[-0.2px]"><div>16°C</div><div className="text-[#5c5c5c]">Cloudy</div></div>
      <svg width="11" height="7" viewBox="0 0 11 7" fill="none" stroke="#222" strokeWidth="1.500"><path d="M1 6l4.500-4.500L10 6" /></svg>
      <svg width="16" height="13" viewBox="0 0 16 13" className="ml-[18px]" fill="none" stroke="#222" strokeWidth="1.200"><path d="M1 5c4-4.500 10-4.500 14 0M3.200 7.300c3-3 6.600-3 9.600 0M5.500 9.500c1.500-1.500 3.500-1.500 5 0" /><circle cx="8" cy="11.300" r="1" fill="#222" /></svg>
      <svg width="16" height="14" viewBox="0 0 16 14" className="ml-2" fill="none" stroke="#222" strokeWidth="1.100"><path d="M1 5h2.500L7 1.500v11L3.500 9H1zM9 5c1 1 1 3 0 4M11 3c2.200 2 2.200 6 0 8" /><path d="M13 1.500c3 3 3 8 0 11" stroke="#aaa" /></svg>
      <div className="w-[79px] text-right tracking-[-0.2px]"><div>18:24</div><div className="whitespace-nowrap">27/07/2025</div></div>
      <div className="w-[17px]" />
    </div>
  </footer>
);

export default function App() {
  return (
    <div className="flex h-[1079px] w-[1918px] flex-col overflow-hidden bg-[#333] font-['Noto_Sans','Open_Sans',sans-serif]">
      <TitleBar />
      <MenuBar />
      <Toolbars />
      <div className="flex h-[929px] overflow-hidden">
        <ModelPanel />
        <div className="w-1.5 shrink-0 bg-[#333]" />
        <Viewport />
        <div className="w-1.5 shrink-0 bg-[#333]" />
        <TasksPanel />
      </div>
      <Taskbar />
    </div>
  );
}
